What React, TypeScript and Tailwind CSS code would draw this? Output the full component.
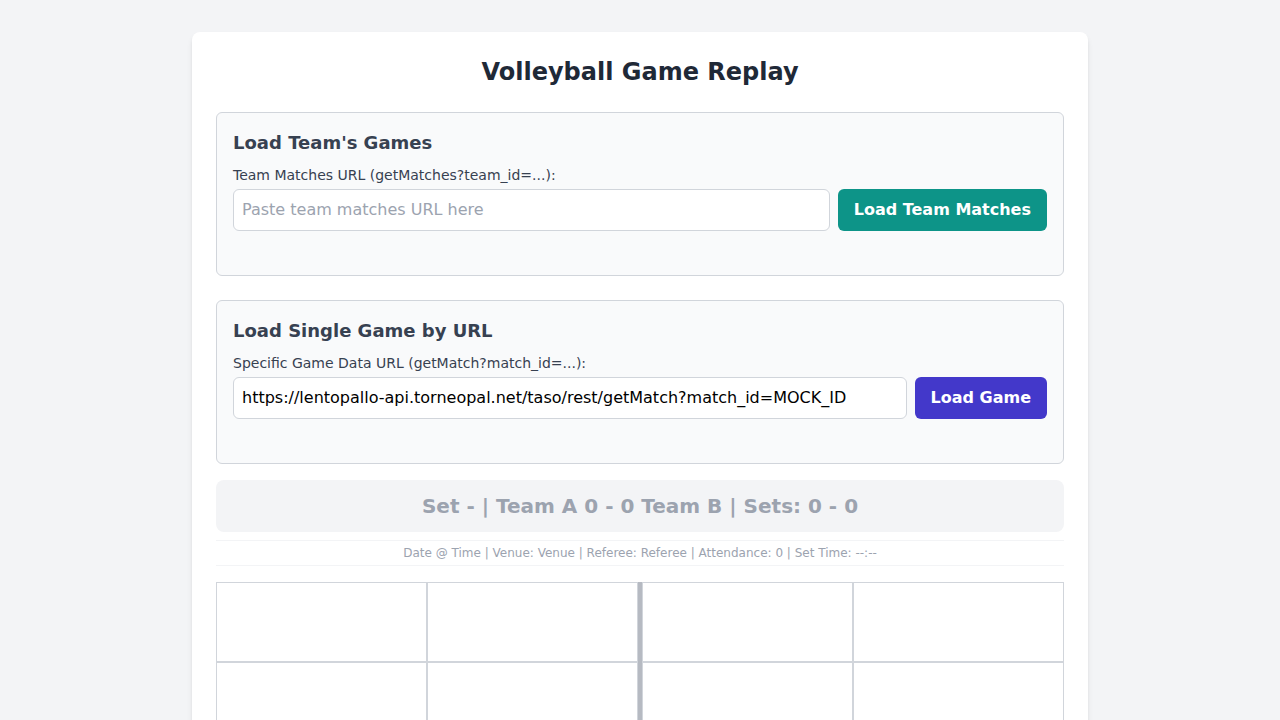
import React from "react";

function Section({
  title,
  label,
  placeholder,
  value,
  button,
  btnClass,
  last,
}: {
  title: string;
  label: string;
  placeholder?: string;
  value?: string;
  button: string;
  btnClass: string;
  last?: boolean;
}) {
  return (
    <div
      className={`${last ? "mb-4" : "mb-6"} rounded-md border border-[#d1d5db] bg-[#f9fafb] p-4`}
    >
      <h2 className="mb-2 text-lg font-bold text-[#374151]">{title}</h2>
      <label className="mb-1 block text-sm text-[#374151]">{label}</label>
      <div className="flex gap-2">
        <input
          type="text"
          readOnly
          placeholder={placeholder}
          defaultValue={value}
          className="min-w-0 flex-1 rounded-md border border-[#d1d5db] bg-white px-2 py-2 text-base text-black placeholder-[#9ca3af] outline-none"
        />
        <button className={`rounded-md px-4 py-2 text-base font-bold text-white ${btnClass}`}>
          {button}
        </button>
      </div>
      <div className="h-7" />
    </div>
  );
}

function Cell() {
  return <div className="h-20 border border-[#d1d5db] bg-white" />;
}

export default function App() {
  return (
    <div
      className="min-h-screen bg-[#f3f4f6] pt-8"
      style={{ fontFamily: '"DejaVu Sans", sans-serif' }}
    >
      <div className="mx-auto max-w-4xl rounded-lg bg-white p-6 shadow-md">
        <h1 className="mb-6 text-center text-2xl font-bold text-[#1f2937]">
          Volleyball Game Replay
        </h1>
        <Section
          title="Load Team's Games"
          label="Team Matches URL (getMatches?team_id=...):"
          placeholder="Paste team matches URL here"
          button="Load Team Matches"
          btnClass="bg-[#0d9488]"
        />
        <Section
          title="Load Single Game by URL"
          label="Specific Game Data URL (getMatch?match_id=...):"
          value="https://lentopallo-api.torneopal.net/taso/rest/getMatch?match_id=MOCK_ID"
          button="Load Game"
          btnClass="bg-[#4338ca]"
          last
        />
        <div className="rounded-lg bg-[#f3f4f6] p-3 text-center text-xl font-bold text-[#9ca3af]">
          Set - | Team A 0 - 0 Team B | Sets: 0 - 0
        </div>
        <div className="mt-2 border-y border-[#f3f4f6] py-1 text-center text-xs text-[#9ca3af]">
          Date @ Time | Venue: Venue | Referee: Referee | Attendance: 0 | Set Time: --:--
        </div>
        <div className="mt-4 flex">
          <div className="grid flex-1 grid-cols-2">
            <Cell />
            <Cell />
            <Cell />
            <Cell />
          </div>
          <div className="w-1 bg-[#b6bac2]" />
          <div className="grid flex-1 grid-cols-2">
            <Cell />
            <Cell />
            <Cell />
            <Cell />
          </div>
        </div>
      </div>
    </div>
  );
}
